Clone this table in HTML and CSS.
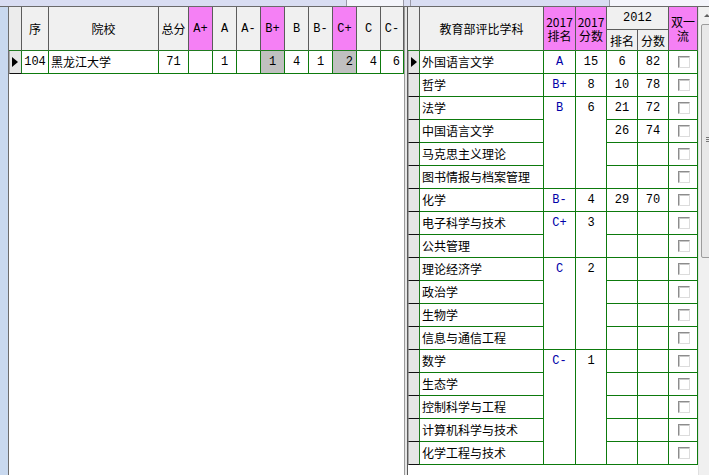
FILE: index.html
```html
<!DOCTYPE html>
<html lang="zh">
<head>
<meta charset="utf-8">
<link rel="stylesheet" href="styles.css">
</head>
<body>
<div class="app">
  <div class="topbar">
    <div class="seg seg-a"></div>
    <div class="seg seg-b"></div>
    <div class="seg seg-c"></div>
    <div class="seg seg-d"></div>
    <div class="seg seg-e"></div>
  </div>
  <div class="main">
    <div class="gutter"></div>
    <div class="lpanel">
      <div class="lgrid">
        <div class="h rh"></div>
        <div class="h">序</div>
        <div class="h">院校</div>
        <div class="h">总分</div>
        <div class="h pink lat">A+</div>
        <div class="h lat">A</div>
        <div class="h lat">A-</div>
        <div class="h pink lat">B+</div>
        <div class="h lat">B</div>
        <div class="h lat">B-</div>
        <div class="h pink lat">C+</div>
        <div class="h lat">C</div>
        <div class="h lat">C-</div>

        <div class="d rh cur"><span class="tri"></span></div>
        <div class="d num">104</div>
        <div class="d txt">黑龙江大学</div>
        <div class="d num">71</div>
        <div class="d num"></div>
        <div class="d num">1</div>
        <div class="d num"></div>
        <div class="d num gray">1</div>
        <div class="d num">4</div>
        <div class="d num">1</div>
        <div class="d num gray right">2</div>
        <div class="d num right">4</div>
        <div class="d num right">6</div>
      </div>
    </div>
    <div class="splitter"></div>
    <div class="rpanel">
      <div class="rgrid">
        <div class="h rh hspan"></div>
        <div class="h hspan">教育部评比学科</div>
        <div class="h pink hspan two"><span>2017</span><span>排名</span></div>
        <div class="h pink hspan two"><span>2017</span><span>分数</span></div>
        <div class="h h2012">2012</div>
        <div class="h pink hspan two"><span>双一</span><span>流</span></div>
        <div class="h sub">排名</div>
        <div class="h sub">分数</div>

        <!-- row 1 -->
        <div class="d rh cur"><span class="tri"></span></div>
        <div class="d txt">外国语言文学</div>
        <div class="d grade">A</div>
        <div class="d num">15</div>
        <div class="d num">6</div>
        <div class="d num">82</div>
        <div class="d chk"><span class="box"></span></div>
        <!-- row 2 -->
        <div class="d rh"></div>
        <div class="d txt">哲学</div>
        <div class="d grade">B+</div>
        <div class="d num">8</div>
        <div class="d num">10</div>
        <div class="d num">78</div>
        <div class="d chk"><span class="box"></span></div>
        <!-- row 3 -->
        <div class="d rh"></div>
        <div class="d txt">法学</div>
        <div class="d grade span4">B</div>
        <div class="d num span4">6</div>
        <div class="d num">21</div>
        <div class="d num">72</div>
        <div class="d chk"><span class="box"></span></div>
        <!-- row 4 -->
        <div class="d rh"></div>
        <div class="d txt">中国语言文学</div>
        <div class="d num">26</div>
        <div class="d num">74</div>
        <div class="d chk"><span class="box"></span></div>
        <!-- row 5 -->
        <div class="d rh"></div>
        <div class="d txt">马克思主义理论</div>
        <div class="d num"></div>
        <div class="d num"></div>
        <div class="d chk"><span class="box"></span></div>
        <!-- row 6 -->
        <div class="d rh"></div>
        <div class="d txt">图书情报与档案管理</div>
        <div class="d num"></div>
        <div class="d num"></div>
        <div class="d chk"><span class="box"></span></div>
        <!-- row 7 -->
        <div class="d rh"></div>
        <div class="d txt">化学</div>
        <div class="d grade">B-</div>
        <div class="d num">4</div>
        <div class="d num">29</div>
        <div class="d num">70</div>
        <div class="d chk"><span class="box"></span></div>
        <!-- row 8 -->
        <div class="d rh"></div>
        <div class="d txt">电子科学与技术</div>
        <div class="d grade span2">C+</div>
        <div class="d num span2">3</div>
        <div class="d num"></div>
        <div class="d num"></div>
        <div class="d chk"><span class="box"></span></div>
        <!-- row 9 -->
        <div class="d rh"></div>
        <div class="d txt">公共管理</div>
        <div class="d num"></div>
        <div class="d num"></div>
        <div class="d chk"><span class="box"></span></div>
        <!-- row 10 -->
        <div class="d rh"></div>
        <div class="d txt">理论经济学</div>
        <div class="d grade span4">C</div>
        <div class="d num span4">2</div>
        <div class="d num"></div>
        <div class="d num"></div>
        <div class="d chk"><span class="box"></span></div>
        <!-- row 11 -->
        <div class="d rh"></div>
        <div class="d txt">政治学</div>
        <div class="d num"></div>
        <div class="d num"></div>
        <div class="d chk"><span class="box"></span></div>
        <!-- row 12 -->
        <div class="d rh"></div>
        <div class="d txt">生物学</div>
        <div class="d num"></div>
        <div class="d num"></div>
        <div class="d chk"><span class="box"></span></div>
        <!-- row 13 -->
        <div class="d rh"></div>
        <div class="d txt">信息与通信工程</div>
        <div class="d num"></div>
        <div class="d num"></div>
        <div class="d chk"><span class="box"></span></div>
        <!-- row 14 -->
        <div class="d rh"></div>
        <div class="d txt">数学</div>
        <div class="d grade span5">C-</div>
        <div class="d num span5">1</div>
        <div class="d num"></div>
        <div class="d num"></div>
        <div class="d chk"><span class="box"></span></div>
        <!-- row 15 -->
        <div class="d rh"></div>
        <div class="d txt">生态学</div>
        <div class="d num"></div>
        <div class="d num"></div>
        <div class="d chk"><span class="box"></span></div>
        <!-- row 16 -->
        <div class="d rh"></div>
        <div class="d txt">控制科学与工程</div>
        <div class="d num"></div>
        <div class="d num"></div>
        <div class="d chk"><span class="box"></span></div>
        <!-- row 17 -->
        <div class="d rh"></div>
        <div class="d txt">计算机科学与技术</div>
        <div class="d num"></div>
        <div class="d num"></div>
        <div class="d chk"><span class="box"></span></div>
        <!-- row 18 -->
        <div class="d rh"></div>
        <div class="d txt">化学工程与技术</div>
        <div class="d num"></div>
        <div class="d num"></div>
        <div class="d chk"><span class="box"></span></div>
      </div>
      <div class="scrollbar">
        <div class="sb-up"><span class="sb-arrow"></span></div>
        <div class="sb-thumb"><span class="grip"></span></div>
      </div>
    </div>
  </div>
</div>
</body>
</html>
```

FILE: styles.css
```css
* { box-sizing: border-box; }
html, body { margin: 0; padding: 0; }
body {
  width: 709px;
  height: 475px;
  overflow: hidden;
  background: #ffffff;
  font-family: "Noto Sans CJK SC", "Noto Sans", sans-serif;
  font-size: 12px;
  color: #000;
}
.app { display: flex; flex-direction: column; height: 475px; }

.topbar {
  height: 7px;
  display: flex;
  border-bottom: 1px solid #6a6a6a;
  flex: none;
}
.seg { height: 6px; border-right: 1px solid #9a9aa8; }
.seg-a { width: 347px; background: #d9ddf2; }
.seg-b { width: 57px; background: #f4f5fb; }
.seg-c { width: 7px; background: #d9ddf2; }
.seg-d { width: 199px; background: #d9ddf2; }
.seg-e { flex: 1; background: #f4f5fb; border-right: none; }

.main { display: flex; flex: 1; min-height: 0; }
.gutter { width: 8px; background: #c9d9ef; flex: none; }
.lpanel {
  width: 397px;
  flex: none;
  background: #fff;
  border-left: 1px solid #6d6d6d;
  border-right: 1px solid #9a9a9a;
}
.splitter { width: 2px; background: #e6e6e6; flex: none; }
.rpanel {
  flex: 1;
  display: flex;
  background: #fff;
  border-left: 1px solid #5a5a5a;
  min-width: 0;
}

.lgrid {
  display: grid;
  grid-template-columns: 13px 27px 110px 30px repeat(8, 24px) 23px;
  grid-template-rows: 44px 23px;
}
.rgrid {
  display: grid;
  grid-template-columns: 12px 124px 32px 31px 31px 31px 29px;
  grid-template-rows: 23px 21px repeat(18, 23px);
  align-self: flex-start;
  flex: none;
}

.h {
  background: #f0f0f0;
  border-right: 1px solid #5c5c5c;
  border-bottom: 1px solid #1f7a1f;
  display: flex;
  align-items: center;
  justify-content: center;
  text-align: center;
  line-height: 14px;
  white-space: nowrap;
}
.h.lat { font-family: "Liberation Mono", "DejaVu Sans Mono", monospace; font-size: 12px; }
.pink { background: #f580f5; }
.hspan { grid-row: span 2; }
.two {
  flex-direction: column;
  gap: 0;
  padding-top: 1px;
}
.two span { display: block; height: 14px; line-height: 14px; }
.h2012 {
  grid-column: span 2;
  border-bottom: 1px solid #5c5c5c;
  font-family: "Liberation Mono", "DejaVu Sans Mono", monospace;
  font-size: 12px;
}
.sub { padding-top: 2px; }
.h.rh { background: #ececec; }

.d {
  border-right: 1px solid #0d7a0d;
  border-bottom: 1px solid #0d7a0d;
  line-height: 22px;
  white-space: nowrap;
  overflow: hidden;
}
.d.rh {
  background: #e6e6e6;
  border-right: 1px solid #1f7a1f;
  border-bottom: 1px solid #111;
  border-left: 1px solid #a8a8a8;
  position: relative;
}
.cur .tri {
  position: absolute;
  left: 2px;
  top: 6px;
  width: 0; height: 0;
  border-top: 5px solid transparent;
  border-bottom: 5px solid transparent;
  border-left: 6px solid #000;
}
.txt { padding-left: 2px; }
.num {
  text-align: center;
  font-family: "Liberation Mono", "DejaVu Sans Mono", monospace;
  font-size: 12px;
}
.num.right { text-align: right; padding-right: 3px; }
.gray { background: #c0c0c0; }
.grade {
  text-align: center;
  font-family: "Liberation Mono", "DejaVu Sans Mono", monospace;
  font-size: 12px;
  color: #0000a8;
}
.span2 { grid-row: span 2; }
.span4 { grid-row: span 4; }
.span5 { grid-row: span 5; }
.chk { display: flex; align-items: center; justify-content: center; }
.box {
  width: 12px;
  height: 12px;
  background: #fff;
  border-top: 1px solid #8c8c8c;
  border-left: 1px solid #8c8c8c;
  border-right: 1px solid #dcdcdc;
  border-bottom: 1px solid #dcdcdc;
  box-shadow: inset 1px 1px 0 #c8c8c8;
  margin-left: 1px;
}

.scrollbar {
  width: 17px;
  flex: none;
  background: #f0f0f0;
  display: flex;
  flex-direction: column;
  align-self: stretch;
  border-left: 1px solid #e0e0e0;
}
.sb-up {
  height: 17px;
  position: relative;
}
.sb-arrow {
  position: absolute;
  left: 5px;
  top: 7px;
  width: 0; height: 0;
  border-left: 3px solid transparent;
  border-right: 3px solid transparent;
  border-bottom: 3px solid #606060;
}
.sb-thumb {
  height: 234px;
  margin: 0 1px 0 2px;
  background: #e8e8e8;
  border: 1px solid #9c9c9c;
  border-radius: 2px;
  position: relative;
}
.grip {
  position: absolute;
  left: 4px;
  top: 112px;
  width: 6px;
  height: 5px;
  border-top: 1px solid #777;
  border-bottom: 1px solid #777;
}
.grip::after {
  content: "";
  position: absolute;
  left: 0; right: 0;
  top: 1px;
  border-top: 1px solid #777;
}
```
